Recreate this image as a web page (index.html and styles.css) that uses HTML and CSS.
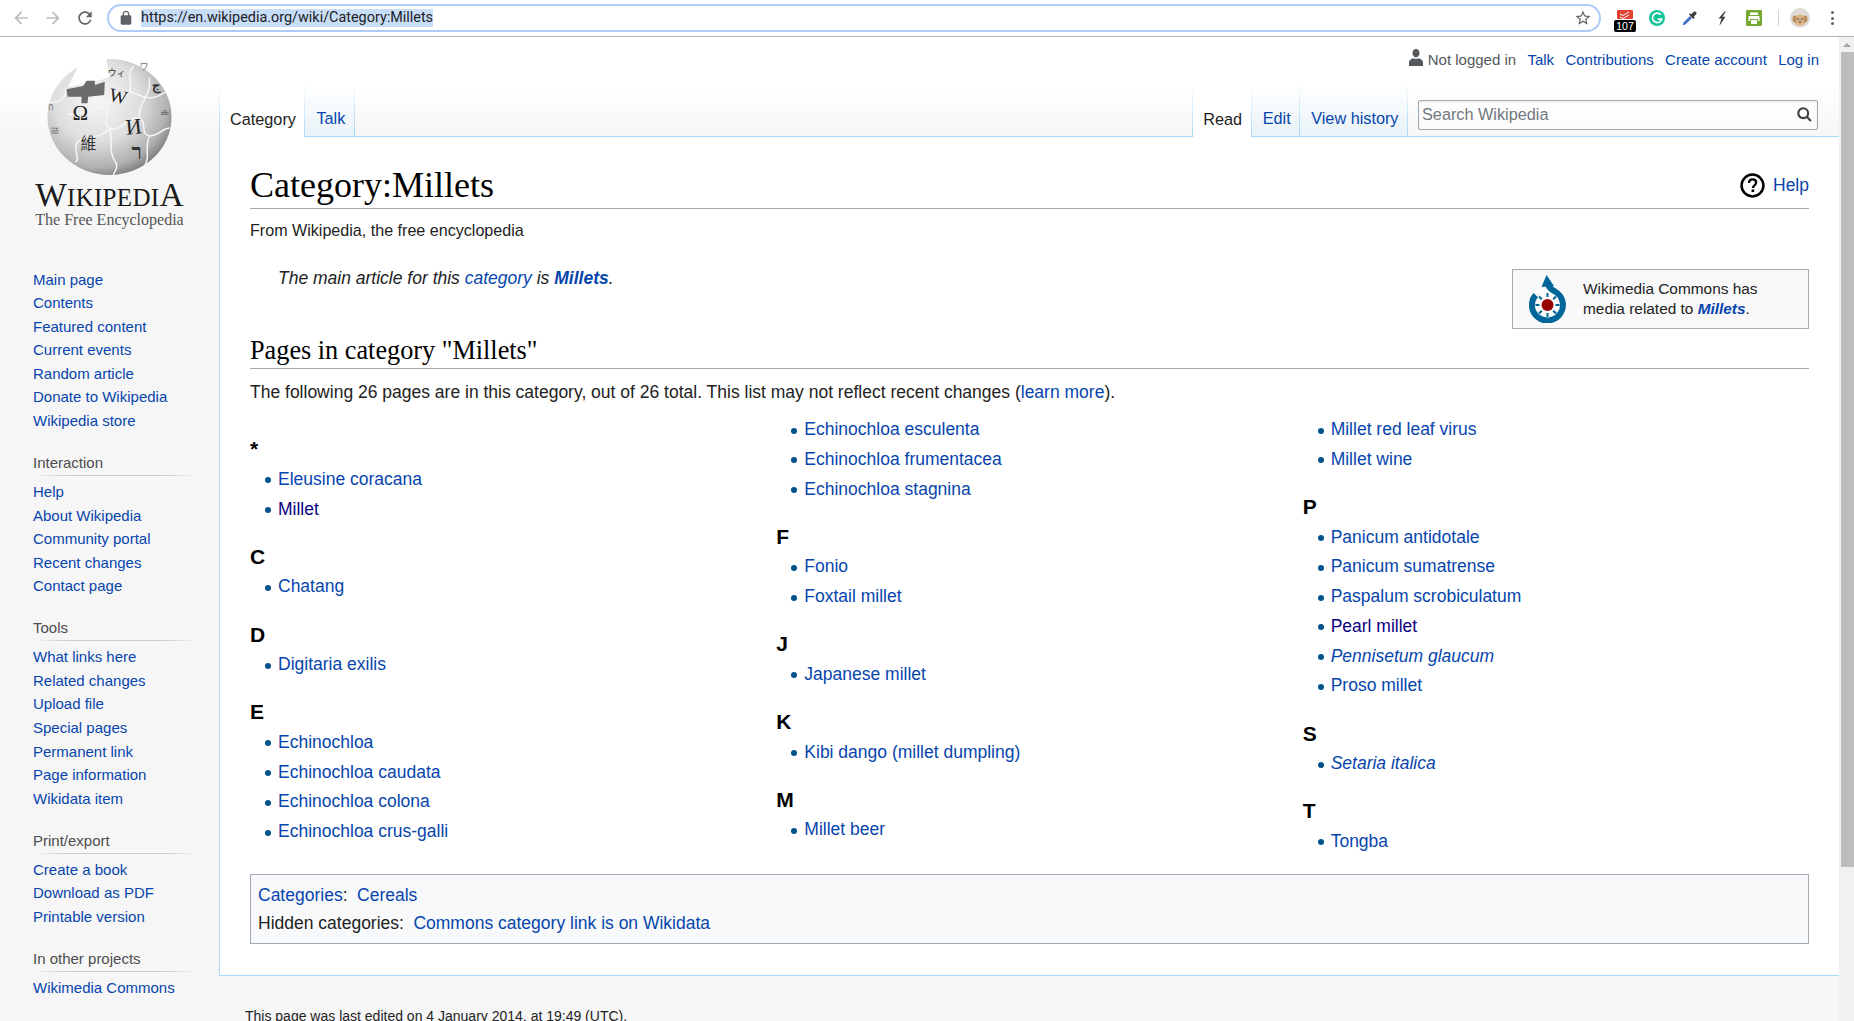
FILE: index.html
```html
<!DOCTYPE html>
<html lang="en">
<head>
  <meta charset="UTF-8">
  <title>Category:Millets - Wikipedia</title>
  <link rel="stylesheet" href="styles.css">
</head>
<body>
<div class="toolbar">
  <svg class="nav-icon" viewBox="0 0 24 24"><path fill="#bdbdbd" d="M20 11H7.830l5.590-5.590L12 4l-8 8 8 8 1.410-1.410L7.830 13H20v-2z"/></svg>
  <svg class="nav-icon" viewBox="0 0 24 24"><path fill="#bdbdbd" d="M12 4l-1.410 1.410L16.170 11H4v2h12.170l-5.580 5.590L12 20l8-8z"/></svg>
  <svg class="nav-icon" viewBox="0 0 24 24"><path fill="#5f6368" d="M17.650 6.350A7.958 7.958 0 0 0 12 4c-4.420 0-7.990 3.580-7.990 8s3.570 8 7.990 8c3.730 0 6.840-2.550 7.730-6h-2.080A5.990 5.990 0 0 1 12 18c-3.310 0-6-2.690-6-6s2.690-6 6-6c1.660 0 3.140.690 4.220 1.780L13 11h7V4l-2.350 2.350z"/></svg>
  <div class="omnibox">
    <svg class="lock" viewBox="0 0 24 24"><path fill="#5f6368" d="M18 8h-1V6c0-2.760-2.240-5-5-5S7 3.240 7 6v2H6c-1.100 0-2 .9-2 2v10c0 1.100.9 2 2 2h12c1.100 0 2-.9 2-2V10c0-1.100-.9-2-2-2zm-3.100 0H9.100V6c0-1.710 1.290-3.100 2.900-3.100s2.900 1.390 2.900 3.100v2z"/></svg>
    <span class="url">https://en.wikipedia.org/wiki/Category:Millets</span>
    <svg class="star" viewBox="0 0 24 24"><path fill="#5f6368" d="M22 9.240l-7.190-.62L12 2 9.190 8.630 2 9.240l5.460 4.730L5.820 21 12 17.270 18.180 21l-1.630-7.030L22 9.240zM12 15.400l-3.760 2.270 1-4.280-3.320-2.880 4.380-.38L12 6.100l1.710 4.040 4.380.38-3.320 2.880 1 4.280L12 15.400z"/></svg>
  </div>
  <div class="ext-todoist">
    <svg class="todoist-top" viewBox="0 0 16 9"><rect width="16" height="9" rx="1" fill="#e44332"/><path d="M3 4l3 1.500L12 2M3 7l3 1.500L12 5" stroke="#fff" fill="none"/></svg>
    <span class="todoist-badge">107</span>
  </div>
  <svg class="ext-icon ext-grammarly" viewBox="0 0 16 16"><circle cx="8" cy="8" r="8" fill="#15c39a"/><path d="M11.800 4.800A4.700 4.700 0 1 0 12.700 9.200H8.800" fill="none" stroke="#fff" stroke-width="1.700"/></svg>
  <svg class="ext-icon ext-dropper" viewBox="0 0 16 16"><path d="M0.800 15.200L1.500 12.500 8 6 10 8 3.500 14.500z" fill="#3f6fc4"/><path d="M7 4.500L11.500 9 12.800 7.700 11.800 6.700 14.500 4A2 2 0 0 0 12 1.500L9.300 4.200 8.300 3.200z" fill="#3c4043"/></svg>
  <svg class="ext-icon" viewBox="0 0 16 16"><path d="M11 1L4.500 8.500H7.500L5.500 15 6 15 11.500 6.800H8.500L11.500 2z" fill="#3c4043"/></svg>
  <svg class="ext-icon" viewBox="0 0 16 16"><rect width="16" height="16" rx="1" fill="#76a832"/><path d="M4 2.500h8V5H4zM2.500 6h11v5H12V9H4v2H2.500zM5 10h6v4H5z" fill="#fff"/></svg>
  <div class="toolbar-sep"></div>
  <svg class="avatar" viewBox="0 0 20 20"><circle cx="10" cy="10" r="10" fill="#dedbd6"/><ellipse cx="10" cy="12" rx="6" ry="5.500" fill="#dcb384"/><ellipse cx="4.500" cy="11" rx="2" ry="3.500" fill="#b98d5e"/><ellipse cx="15.500" cy="11" rx="2" ry="3.500" fill="#b98d5e"/><circle cx="8" cy="11" r=".8" fill="#333"/><circle cx="12" cy="11" r=".8" fill="#333"/><ellipse cx="10" cy="14" rx="1.200" ry=".8" fill="#5a3d2b"/></svg>
  <div class="kebab"><i></i><i></i><i></i></div>
</div>

<div class="window">
  <div class="page">
    <div class="page-base"></div>
    <div class="sidebar">
      <div class="logo">
        <svg class="globe" viewBox="0 0 124 118">
          <defs>
            <radialGradient id="sphere" cx="40%" cy="36%" r="70%">
              <stop offset="0" stop-color="#f6f6f6"/>
              <stop offset=".5" stop-color="#dedede"/>
              <stop offset=".82" stop-color="#b0b0b0"/>
              <stop offset="1" stop-color="#707070"/>
            </radialGradient>
          </defs>
          <ellipse cx="62" cy="59" rx="62" ry="58" fill="url(#sphere)"/>
          <path d="M34 -1L59 1 62.300 18.700 55.700 21.300 20.700 29.300 28 14z" fill="#fff"/>
          <path d="M2 44C12 46 20 38 18 30M20 56C36 58 48 48 58 50C66 54 52 64 62 70C72 76 80 58 92 60C100 64 92 76 102 78C110 78 116 70 122 70M58 50C62 38 76 44 82 34C86 24 78 18 86 8M82 34C94 36 100 46 118 34M62 70C54 82 40 76 30 84C24 92 34 100 28 104M62 70C66 84 60 92 68 104C72 110 66 114 66 117M92 60C90 44 104 40 102 20M102 78C96 92 104 98 96 110" fill="none" stroke="#f7f7f7" stroke-width="1.500"/>
          <path d="M19 31.300L35.700 28 39 22.700 47.300 22.700 47.300 27 57.300 23.700 56.700 37 40.700 38.700 40 45.300 34 45.300 34 38.700 20 38.700z" fill="#6b6b6b"/>
          <text class="globe-glyph" x="25" y="62" font-size="21">Ω</text>
          <text class="globe-glyph" x="62" y="45" font-size="19" transform="rotate(14 72 38)">W</text>
          <text class="globe-glyph" x="78" y="76" font-size="22" transform="rotate(-6 86 67)">И</text>
          <text class="globe-cjk" x="33" y="91" font-size="16">維</text>
          <text class="globe-glyph globe-seven" x="84" y="101" font-size="21">ר</text>
          <text class="globe-cjk" x="60" y="18" font-size="9">ウィ</text>
          <text class="globe-glyph globe-seven" x="104" y="32" font-size="13">ج</text>
          <text class="globe-cjk globe-faint" x="92" y="12" font-size="9">ワ</text>
          <text class="globe-cjk globe-faint" x="0" y="52" font-size="9">ก</text>
          <text class="globe-cjk globe-faint" x="3" y="76" font-size="10">ळ</text>
          <text class="globe-cjk globe-faint" x="112" y="57" font-size="9">ക</text>
        </svg>
        <div class="logo-word">W<small>IKIPEDI</small>A</div>
        <div class="logo-tag">The Free Encyclopedia</div>
      </div>

      <div class="portal portal-first">
        <ul>
          <li><a href="#">Main page</a></li>
          <li><a href="#">Contents</a></li>
          <li><a href="#">Featured content</a></li>
          <li><a href="#">Current events</a></li>
          <li><a href="#">Random article</a></li>
          <li><a href="#">Donate to Wikipedia</a></li>
          <li><a href="#">Wikipedia store</a></li>
        </ul>
      </div>
      <div class="portal">
        <h3>Interaction</h3>
        <ul>
          <li><a href="#">Help</a></li>
          <li><a href="#">About Wikipedia</a></li>
          <li><a href="#">Community portal</a></li>
          <li><a href="#">Recent changes</a></li>
          <li><a href="#">Contact page</a></li>
        </ul>
      </div>
      <div class="portal">
        <h3>Tools</h3>
        <ul>
          <li><a href="#">What links here</a></li>
          <li><a href="#">Related changes</a></li>
          <li><a href="#">Upload file</a></li>
          <li><a href="#">Special pages</a></li>
          <li><a href="#">Permanent link</a></li>
          <li><a href="#">Page information</a></li>
          <li><a href="#">Wikidata item</a></li>
        </ul>
      </div>
      <div class="portal">
        <h3>Print/export</h3>
        <ul>
          <li><a href="#">Create a book</a></li>
          <li><a href="#">Download as PDF</a></li>
          <li><a href="#">Printable version</a></li>
        </ul>
      </div>
      <div class="portal">
        <h3>In other projects</h3>
        <ul>
          <li><a href="#">Wikimedia Commons</a></li>
        </ul>
      </div>
    </div>

    <div class="main">
      <div class="personal">
        <svg class="user-icon" viewBox="0 0 16 17"><path fill="#54595d" d="M8 0c2.200 0 3.500 1.700 3.500 4S10 8.500 8 8.500 4.500 6.300 4.500 4 5.800 0 8 0zM1 17v-3.500C1 11 3.500 10 5.500 9.300c1.500.8 3.500.8 5 0 2 .7 4.500 1.700 4.500 4.200V17z"/></svg>
        <span class="not-logged">Not logged in</span>
        <a href="#">Talk</a>
        <a href="#">Contributions</a>
        <a href="#">Create account</a>
        <a href="#">Log in</a>
      </div>
      <div class="tabs-row">
        <div class="tabs">
          <div class="tab tab-selected"><span>Category</span></div>
          <div class="tab"><a href="#">Talk</a></div>
        </div>
        <div class="tabs-right">
          <div class="tabs">
            <div class="tab tab-selected"><span>Read</span></div>
            <div class="tab"><a href="#">Edit</a></div>
            <div class="tab"><a href="#">View history</a></div>
          </div>
          <div class="search">
            <input class="search-input" type="text" placeholder="Search Wikipedia">
            <svg class="search-icon" viewBox="0 0 14 14"><path fill="none" stroke="#404040" stroke-width="2" d="M5.800 1.200a4.600 4.600 0 1 0 0 9.200 4.600 4.600 0 0 0 0-9.200zM9 9l4 4"/></svg>
          </div>
        </div>
      </div>

      <div class="content">
        <div class="first-heading-row">
          <h1 class="first-heading">Category:Millets</h1>
          <a class="help-link" href="#">
            <svg class="help-icon" viewBox="0 0 24 24"><circle cx="12" cy="12" r="10.500" fill="none" stroke="#000" stroke-width="2.400"/><path d="M8.600 9.600C8.700 7.500 10 6.200 12 6.200s3.500 1.200 3.500 3c0 2.600-3.100 2.700-3.100 5.200" fill="none" stroke="#000" stroke-width="2.200"/><rect x="11.100" y="15.800" width="2.500" height="2.500"/></svg>
            Help
          </a>
        </div>
        <div class="site-sub">From Wikipedia, the free encyclopedia</div>

        <div class="commons-box">
          <svg class="commons-logo" viewBox="0 0 38 48">
            <path d="M6.600 20A15.500 15.500 0 1 0 26 16.500C23 15 20 13 19 9" fill="none" stroke="#069" stroke-width="6"/>
            <path d="M17.500 0L25 11 12.500 12z" fill="#069"/>
            <path d="M18.500 22V18M18.500 38V42M10.500 30H6.500M26.500 30H30.500M12.800 24.300L10 21.500M24.200 24.300L27 21.500M12.800 35.700L10 38.500M24.200 35.700L27 38.500" stroke="#069" stroke-width="2"/>
            <circle cx="18.500" cy="30" r="6" fill="#900"/>
          </svg>
          <div class="commons-text">Wikimedia Commons has media related to <a href="#"><b><i>Millets</i></b></a>.</div>
        </div>
        <div class="hatnote">The main article for this <a href="#">category</a> is <a href="#"><b>Millets</b></a>.</div>

        <h2 class="sub-heading">Pages in category "Millets"</h2>
        <p class="intro">The following 26 pages are in this category, out of 26 total. This list may not reflect recent changes (<a href="#">learn more</a>).</p>

        <div class="category-columns">
          <div class="category-col">
            <h3>*</h3>
            <ul>
              <li><a href="#">Eleusine coracana</a></li>
              <li><a class="visited" href="#">Millet</a></li>
            </ul>
            <h3>C</h3>
            <ul>
              <li><a href="#">Chatang</a></li>
            </ul>
            <h3>D</h3>
            <ul>
              <li><a href="#">Digitaria exilis</a></li>
            </ul>
            <h3>E</h3>
            <ul>
              <li><a href="#">Echinochloa</a></li>
              <li><a href="#">Echinochloa caudata</a></li>
              <li><a href="#">Echinochloa colona</a></li>
              <li><a href="#">Echinochloa crus-galli</a></li>
            </ul>
          </div>
          <div class="category-col">
            <ul>
              <li><a href="#">Echinochloa esculenta</a></li>
              <li><a href="#">Echinochloa frumentacea</a></li>
              <li><a href="#">Echinochloa stagnina</a></li>
            </ul>
            <h3>F</h3>
            <ul>
              <li><a href="#">Fonio</a></li>
              <li><a href="#">Foxtail millet</a></li>
            </ul>
            <h3>J</h3>
            <ul>
              <li><a href="#">Japanese millet</a></li>
            </ul>
            <h3>K</h3>
            <ul>
              <li><a href="#">Kibi dango (millet dumpling)</a></li>
            </ul>
            <h3>M</h3>
            <ul>
              <li><a href="#">Millet beer</a></li>
            </ul>
          </div>
          <div class="category-col">
            <ul>
              <li><a href="#">Millet red leaf virus</a></li>
              <li><a href="#">Millet wine</a></li>
            </ul>
            <h3>P</h3>
            <ul>
              <li><a href="#">Panicum antidotale</a></li>
              <li><a href="#">Panicum sumatrense</a></li>
              <li><a href="#">Paspalum scrobiculatum</a></li>
              <li><a class="visited" href="#">Pearl millet</a></li>
              <li><a href="#"><i>Pennisetum glaucum</i></a></li>
              <li><a href="#">Proso millet</a></li>
            </ul>
            <h3>S</h3>
            <ul>
              <li><a href="#"><i>Setaria italica</i></a></li>
            </ul>
            <h3>T</h3>
            <ul>
              <li><a href="#">Tongba</a></li>
            </ul>
          </div>
        </div>

        <div class="catlinks">
          <div class="catlinks-row"><a href="#">Categories</a>:<a class="catlink" href="#">Cereals</a></div>
          <div class="catlinks-row">Hidden categories:<a class="catlink" href="#">Commons category link is on Wikidata</a></div>
        </div>
      </div>

      <div class="footer">This page was last edited on 4 January 2014, at 19:49 (UTC).</div>
    </div>
  </div>
  <div class="scrollbar">
    <div class="scroll-up"></div>
    <div class="scroll-thumb"></div>
  </div>
</div>
</body>
</html>
```

FILE: styles.css
```css
html, body {
  margin: 0;
  height: 100%;
  overflow: hidden;
}

body {
  font-family: "Liberation Sans", Arial, sans-serif;
  color: #222;
  background-color: #fff;
}

a {
  color: #0645ad;
  text-decoration: none;
}

a.visited {
  color: #0b0080;
}

ul {
  list-style: none;
  margin: 0;
  padding: 0;
}

/* browser chrome */
.toolbar {
  display: flex;
  align-items: center;
  height: 36px;
  border-bottom: 1px solid #b2b2b2;
  padding-left: 11px;
}

.nav-icon {
  width: 20px;
  height: 20px;
  margin-right: 12px;
  flex: none;
}

.omnibox {
  display: flex;
  align-items: center;
  width: 1481px;
  height: 24px;
  border: 2px solid #aecbfa;
  border-radius: 14px;
  padding-left: 9px;
  flex: none;
}

.lock {
  width: 16px;
  height: 16px;
  flex: none;
}

.url {
  margin-left: 7px;
  font-family: Roboto, sans-serif;
  font-size: 14.400px;
  line-height: 18px;
  color: #202124;
  background-color: #c8ddf7;
}

.star {
  width: 18px;
  height: 18px;
  margin-left: auto;
  margin-right: 7px;
}

.ext-todoist {
  width: 22px;
  height: 22px;
  margin: 6px 0 0 13px;
  flex: none;
}

.todoist-top {
  display: block;
  width: 16px;
  height: 9px;
  margin: 0 auto;
}

.todoist-badge {
  display: block;
  height: 12px;
  margin-top: 1px;
  background-color: #000;
  border-radius: 2px;
  color: #fff;
  font-size: 10.500px;
  line-height: 12px;
  text-align: center;
}

.ext-icon {
  width: 16px;
  height: 16px;
  margin-left: 16px;
  flex: none;
}

.ext-grammarly {
  margin-left: 13px;
}

.ext-dropper {
  margin-left: 17px;
}

.toolbar-sep {
  width: 1px;
  height: 16px;
  margin-left: 16px;
  background-color: #d5d5d5;
}

.avatar {
  width: 20px;
  height: 20px;
  margin-left: 11px;
  flex: none;
}

.kebab {
  display: flex;
  flex-direction: column;
  gap: 2.500px;
  margin-left: 21px;
}

.kebab i {
  display: block;
  width: 3px;
  height: 3px;
  border-radius: 50%;
  background-color: #5f6368;
}

/* window */
.window {
  display: flex;
  height: 984px;
}

.page {
  position: relative;
  display: flex;
  flex: 1;
  min-width: 0;
  overflow: hidden;
  background-color: #f6f6f6;
}

.page-base {
  position: absolute;
  top: 0;
  left: 0;
  width: 100%;
  height: 100px;
  background-image: linear-gradient(#fff 50%, #f6f6f6 100%);
}

.scrollbar {
  width: 15px;
  flex: none;
  background-color: #f1f1f1;
}

.scroll-up {
  width: 0;
  height: 0;
  margin: 6px 0 0 4px;
  border-left: 4px solid transparent;
  border-right: 4px solid transparent;
  border-bottom: 4px solid #a3a3a3;
}

.scroll-thumb {
  width: 13px;
  height: 815px;
  margin: 5px 0 0 2px;
  background-color: #bdbdbd;
}

/* sidebar */
.sidebar {
  position: relative;
  width: 219px;
  flex: none;
  font-size: 15px;
}

.logo {
  height: 230.500px;
  text-align: center;
  overflow: hidden;
}

.globe {
  display: block;
  width: 127px;
  height: 118px;
  margin: 21px auto 0;
  overflow: visible;
}

.globe-glyph {
  font-family: "Liberation Serif", serif;
  fill: #222;
}

.globe-seven {
  font-weight: bold;
  fill: #333;
}

.globe-cjk {
  font-family: "Noto Sans CJK TC", sans-serif;
  fill: #333;
}

.globe-faint {
  fill: #707070;
}

.logo-word {
  margin-top: 1.500px;
  font-family: "Liberation Serif", serif;
  font-size: 33.400px;
  line-height: 33px;
  color: #1a1a1a;
  letter-spacing: 0.3px;
  white-space: nowrap;
}

.logo-word small {
  font-size: 25px;
}

.logo-tag {
  margin-top: -2.500px;
  font-family: "Liberation Serif", serif;
  font-size: 16px;
  line-height: 18px;
  color: #555;
  white-space: nowrap;
}

.portal {
  margin: 18.250px 22px 0 33px;
}

.portal-first {
  margin-top: 0;
}

.portal h3 {
  margin: 0 0 4px;
  height: 25px;
  font-size: 15px;
  font-weight: normal;
  line-height: 24px;
  color: #4d4d4d;
  background-image: linear-gradient(to right, rgba(200, 204, 209, 0) 0, #c8ccd1 20%, #c8ccd1 80%, rgba(200, 204, 209, 0) 100%);
  background-size: 100% 1px;
  background-position: bottom;
  background-repeat: no-repeat;
}

.portal li {
  height: 23.600px;
  line-height: 23.600px;
  white-space: nowrap;
}

/* header above content */
.main {
  position: relative;
  flex: 1;
  min-width: 0;
}

.personal {
  display: flex;
  justify-content: flex-end;
  align-items: center;
  gap: 11.300px;
  height: 48px;
  padding: 0 20px 4px 0;
  box-sizing: border-box;
  font-size: 15px;
}

.user-icon {
  width: 16px;
  height: 17px;
  margin-right: -7.300px;
  margin-top: -3px;
}

.not-logged {
  color: #54595d;
}

.tabs-row {
  position: relative;
  z-index: 1;
  display: flex;
  justify-content: space-between;
  height: 52px;
  margin-bottom: -1px;
}

.tabs {
  display: flex;
}

.tabs-right {
  display: flex;
}

.tab {
  display: flex;
  align-items: flex-end;
  box-sizing: border-box;
  height: 52px;
  padding: 0 8.500px 8px 11px;
  font-size: 16.250px;
  line-height: 20px;
  background-image: linear-gradient(#fff 0, #e8f2f8 100%);
  border-right: 1px solid transparent;
  border-bottom: 1px solid #a7d7f9;
  border-image: linear-gradient(rgba(167, 215, 249, 0), #a7d7f9) 1;
  border-width: 0 1px 1px 0;
}

.tab:first-child {
  padding-left: 10px;
  border-left: 1px solid transparent;
  border-left-width: 1px;
}

.tab-selected {
  background-image: none;
  background-color: #fff;
  border-bottom-width: 0;
  color: #222;
}

.search {
  position: relative;
  margin: 15px 21px 0 10px;
  width: 400px;
  height: 30px;
}

.search-input {
  display: block;
  width: 100%;
  height: 100%;
  box-sizing: border-box;
  padding: 0 4px 2px 3px;
  border: 1px solid #a2a9b1;
  border-radius: 2px;
  background-color: rgba(255, 255, 255, 0.5);
  font-family: "Liberation Sans", Arial, sans-serif;
  font-size: 16.250px;
  box-shadow: inset 0 1px 3px rgba(0, 0, 0, 0.08);
}

.search-input::placeholder {
  color: #72777d;
  opacity: 1;
}

.search-icon {
  position: absolute;
  top: 7px;
  right: 6px;
  width: 15px;
  height: 15px;
}

/* content */
.content {
  background-color: #fff;
  border-top: 1px solid #a7d7f9;
  border-bottom: 1px solid #a7d7f9;
  border-left: 1px solid #a7d7f9;
  padding: 0 30px 31px 30px;
  font-size: 17.500px;
  line-height: 28px;
}

.first-heading-row {
  display: flex;
  justify-content: space-between;
  align-items: center;
  padding-top: 25px;
  border-bottom: 1px solid #a2a9b1;
}

.first-heading {
  margin: 0;
  font-family: "Liberation Serif", serif;
  font-size: 36px;
  font-weight: normal;
  line-height: 46px;
  color: #000;
}

.help-link {
  display: flex;
  align-items: center;
  gap: 8px;
}

.help-icon {
  width: 25px;
  height: 25px;
}

.site-sub {
  margin-top: 8px;
  font-size: 16.100px;
  line-height: 26px;
}

.commons-box {
  float: right;
  display: flex;
  align-items: center;
  box-sizing: border-box;
  width: 297px;
  height: 60px;
  margin-top: 26px;
  border: 1px solid #aaa;
  background-color: #f9f9f9;
  font-size: 15.400px;
  line-height: 20px;
}

.commons-logo {
  width: 38px;
  height: 48px;
  margin: 0 16px 0 16px;
  flex: none;
}

.commons-text {
  padding-right: 30px;
}

.hatnote {
  margin-top: 21px;
  padding-left: 28px;
  font-style: italic;
}

.sub-heading {
  margin: 41px 0 0;
  font-family: "Liberation Serif", serif;
  font-size: 26.250px;
  font-weight: normal;
  line-height: 35px;
  color: #000;
  border-bottom: 1px solid #a2a9b1;
}

.intro {
  margin: 9px 0 9px;
}

.category-columns {
  display: grid;
  grid-template-columns: repeat(3, 1fr);
  column-gap: 20px;
}

.category-col h3 {
  margin: 19.300px 0 0;
  font-size: 21px;
  font-weight: bold;
  line-height: 30.500px;
  color: #000;
}

.category-col ul {
  padding-left: 15px;
}

.category-col li {
  margin-bottom: 1.750px;
  white-space: nowrap;
}

.category-col li::before {
  content: "";
  display: inline-block;
  width: 6px;
  height: 6px;
  margin-right: 7px;
  border-radius: 50%;
  background-color: #00528c;
  vertical-align: 1.500px;
}

.catlinks {
  margin-top: 17.100px;
  padding: 6.500px 7px 6px;
  border: 1px solid #a2a9b1;
  background-color: #f8f9fa;
}

.catlink {
  margin-left: 9.500px;
}

.footer {
  position: relative;
  padding: 30px 0 0 26px;
  font-size: 14px;
  line-height: 20px;
  color: #222;
}
```
